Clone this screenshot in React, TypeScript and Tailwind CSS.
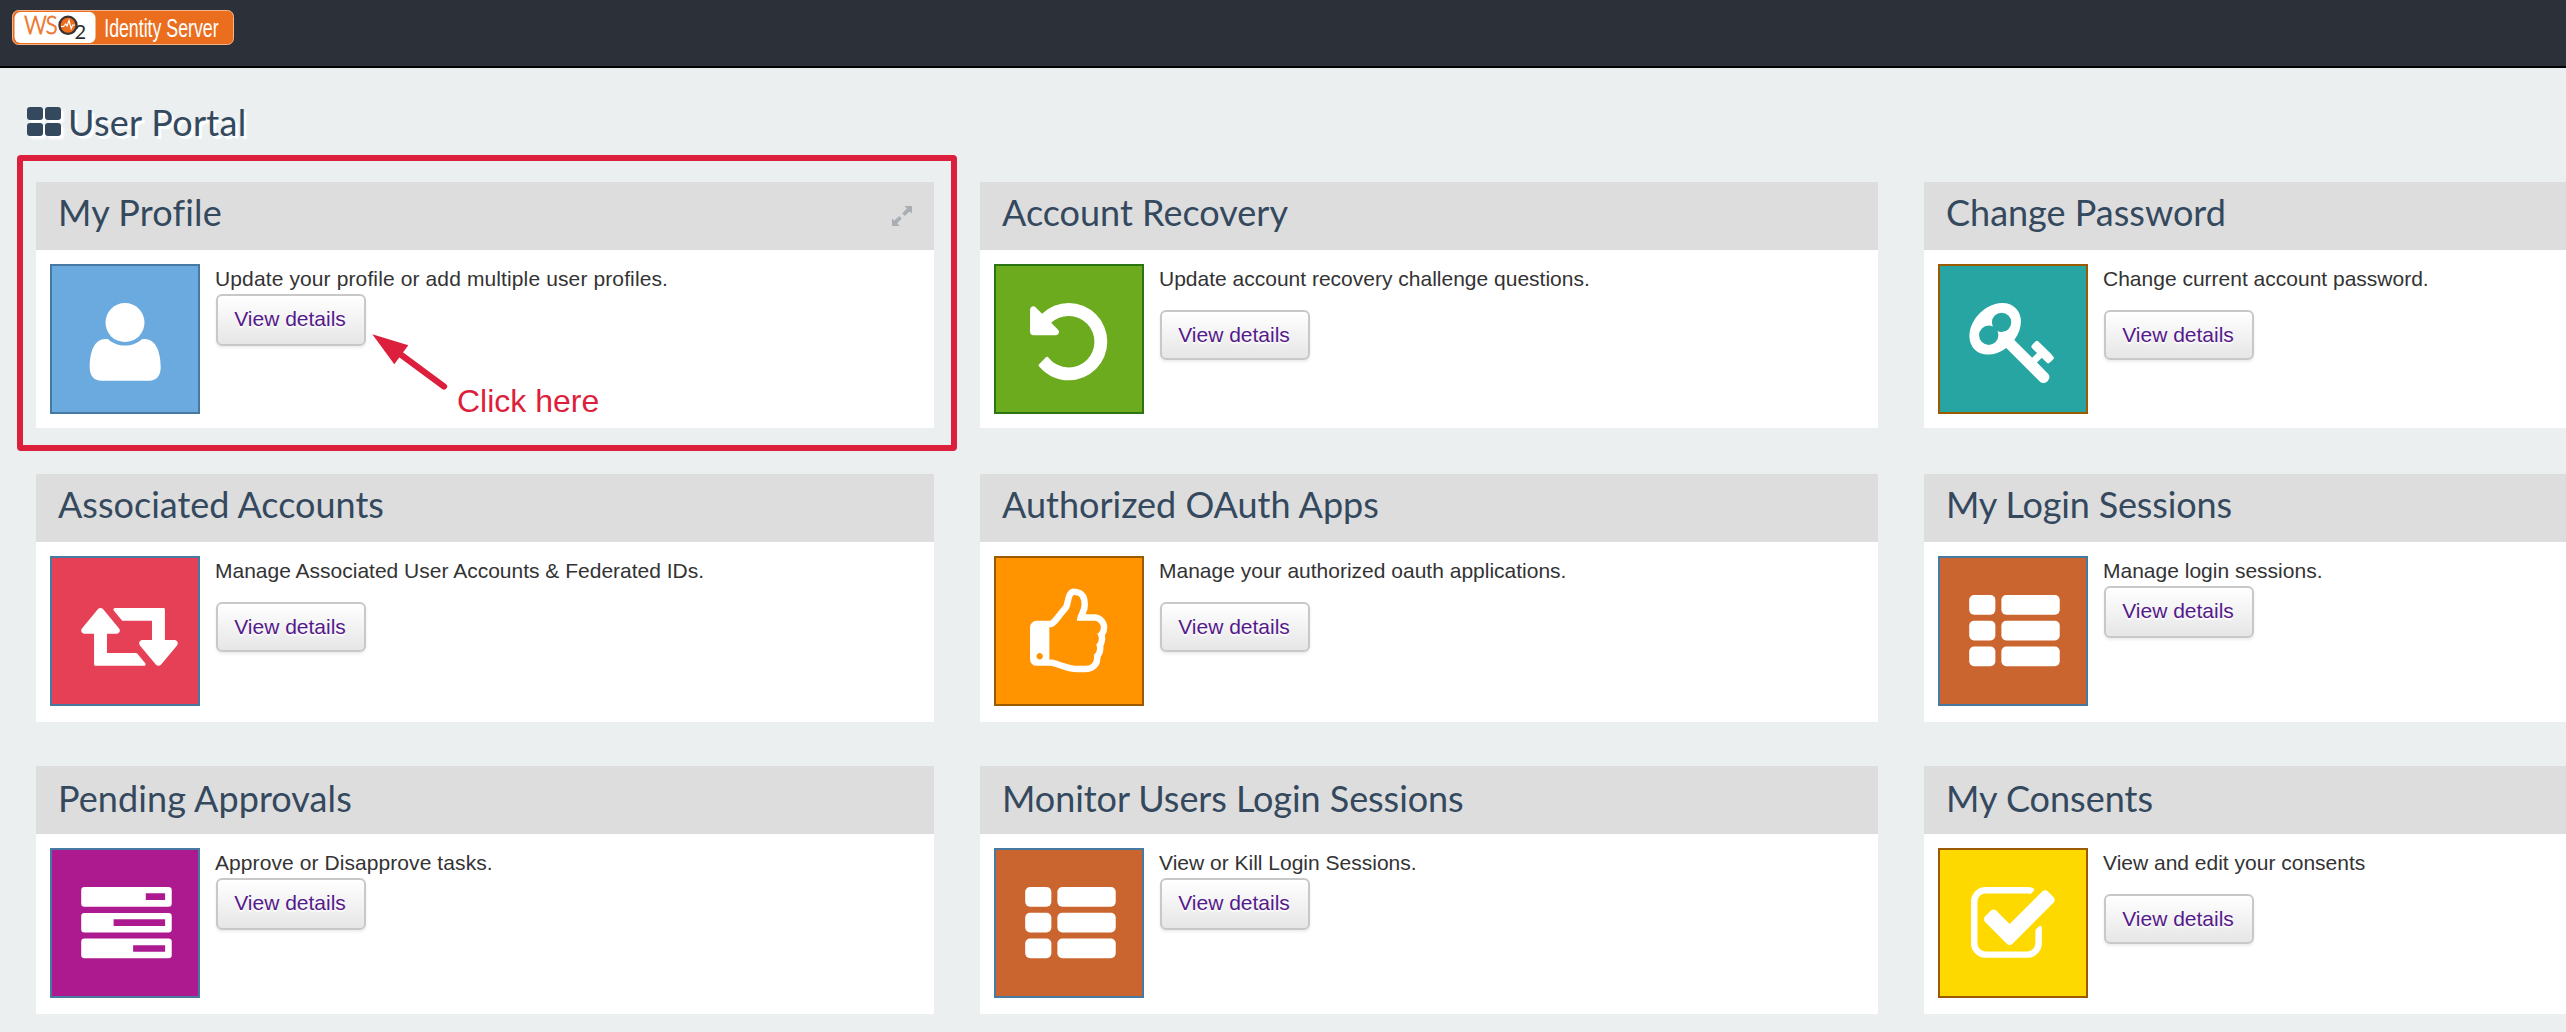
import React from "react";

type IconName = "user" | "undo" | "key" | "retweet" | "thumb" | "list" | "tasks" | "check";

const PATHS: Record<string, string> = {
  undo: "M1664 896q0 156-61 298t-164 245-245 164-298 61q-172 0-327-72.5t-264-204.5q-7-10-6.5-22.5t8.5-20.5l137-138q10-9 25-9 16 2 23 12 73 95 179 147t225 52q104 0 198.5-40.5t163.5-109.5 109.5-163.5 40.5-198.5-40.5-198.5-109.5-163.5-163.5-109.5-198.5-40.5q-98 0-188 35.5t-160 101.5l137 138q31 30 14 69-17 40-59 40h-448q-26 0-45-19t-19-45v-448q0-42 40-59 39-17 69 14l130 129q107-101 244.5-156.5t284.5-55.5q156 0 298 61t245 164 164 245 61 298z",
  key: "M832 512q0-80-56-136t-136-56-136 56-56 136q0 42 19 83-41-19-83-19-80 0-136 56t-56 136 56 136 136 56 136-56 56-136q0-42-19-83 41 19 83 19 80 0 136-56t56-136zm851 704q0 17-49 66t-66 49q-9 0-28.5-16t-36.5-33-38.5-40-24.5-26l-96 96 220 220q28 28 28 68 0 42-39 81t-81 39q-40 0-68-28l-671-671q-176 131-365 131-163 0-265.5-102.5t-102.5-265.5q0-160 95-313t248-248 313-95q163 0 265.5 102.5t102.5 265.5q0 189-131 365l355 355 96-96q-3-3-26-24.5t-40-38.5-33-36.5-16-28.5q0-17 49-66t66-49q13 0 23 10 6 6 46 44.5t82 79.5 86.5 86 73 78 28.5 41z",
  retweet: "M1280 1504q0 13-9.5 22.5t-22.5 9.5h-960q-8 0-13.5-2t-9-7-5.5-8-3-11.5-1-11.5v-600h-192q-26 0-45-19t-19-45q0-24 15-41l320-384q19-22 49-22t49 22l320 384q15 17 15 41 0 26-19 45t-45 19h-192v384h576q16 0 25 11l160 192q7 10 7 21zm640-416q0 24-15 41l-320 384q-20 23-49 23t-49-23l-320-384q-15-17-15-41 0-26 19-45t45-19h192v-384h-576q-16 0-25-12l-160-192q-7-9-7-20 0-13 9.5-22.5t22.5-9.5h960q8 0 13.5 2t9 7 5.5 8 3 11.5 1 11.5v600h192q26 0 45 19t19 45z",
  thumb: "M384 1344q0-26-19-45t-45-19-45 19-19 45 19 45 45 19 45-19 19-45zm1152-576q0-51-39-89.5t-89-38.5h-352q0-58 48-159.5t48-160.5q0-98-32-145t-128-47q-26 26-38 85t-30.5 125.5-59.5 109.5q-22 23-77 91-4 5-23 30t-31.5 41-34.5 42.5-40 44-38.5 35.5-40 27-35.5 9h-32v640h32q13 0 31.5 3t33 6.5 38 11 35 11.5 35.5 12.5 29 10.5q211 73 342 73h121q192 0 192-167 0-26-5-56 30-16 47.5-52.5t17.5-73.5-18-69q53-50 53-119 0-25-10-55.5t-25-47.5q32-1 53.5-47t21.5-81zm128-1q0 89-49 163 9 33 9 69 0 77-38 144 3 21 3 43 0 101-60 178 1 139-85 219.5t-227 80.5h-129q-96 0-189.5-22.5t-216.5-65.5q-116-40-138-40h-288q-53 0-90.5-37.5t-37.5-90.5v-640q0-53 37.5-90.5t90.5-37.5h274q36-24 137-155 58-75 107-128 24-25 35.5-85.5t30.5-126.5 62-108q39-37 90-37 84 0 151 32.5t102 101.5 35 186q0 93-48 192h176q104 0 180 76t76 179z",
  check: "M1472 930v318q0 119-84.5 203.5t-203.5 84.5h-832q-119 0-203.5-84.5t-84.5-203.5v-832q0-119 84.5-203.5t203.5-84.5h832q63 0 117 25 15 7 18 23 3 17-9 29l-49 49q-10 10-23 10-3 0-9-2-23-6-45-6h-832q-66 0-113 47t-47 113v832q0 66 47 113t113 47h832q66 0 113-47t47-113v-254q0-13 9-22l64-64q10-10 23-10 6 0 12 3 20 8 20 29zm231-489l-814 814q-24 24-57 24t-57-24l-430-430q-24-24-24-57t24-57l110-110q24-24 57-24t57 24l263 263 647-647q24-24 57-24t57 24l110 110q24 24 24 57t-24 57z",
};

/* Horizontal origin of each glyph inside the 146px tile face. */
const ORIGIN: Record<IconName, number> = {
  user: 0, undo: 27.6, key: 29.4, retweet: 29.2, thumb: 27.6, list: 29.2, tasks: 29.2, check: 27.8,
};

function TileIcon({ name }: { name: IconName }) {
  if (name === "user") {
    return (
      <svg viewBox="2 2 146 146" className="size-full fill-white">
        <circle cx="75" cy="58.6" r="19.5" />
        <path d="M58.2 75.2C67 83.6 83 83.6 91.8 75.2C104 73 110.7 85 110.7 103.5C110.7 111.5 106.5 116.8 99 116.8H51.5C44 116.8 39.7 111.5 39.7 103.5C39.7 85 46 73 58.2 75.2Z" />
      </svg>
    );
  }
  const rows = [128, 640, 1152];
  return (
    <svg viewBox="0 0 146 146" className="size-full fill-white">
      <g transform={`translate(${ORIGIN[name]} 30.6) scale(0.0503)`}>
        {name === "list" &&
          rows.map((y) => (
            <g key={y}>
              <rect x="0" y={y} width="520" height="390" rx="96" />
              <rect x="640" y={y} width="1160" height="390" rx="96" />
            </g>
          ))}
        {name === "tasks" && (
          <path
            fillRule="evenodd"
            d="M64 128H1736a64 64 0 0 1 64 64V454a64 64 0 0 1-64 64H64a64 64 0 0 1-64-64V192a64 64 0 0 1 64-64zM1284 252V386H1668V252zM64 644H1736a64 64 0 0 1 64 64V966a64 64 0 0 1-64 64H64a64 64 0 0 1-64-64V708a64 64 0 0 1 64-64zM644 768V902H1668V768zM64 1152H1736a64 64 0 0 1 64 64V1478a64 64 0 0 1-64 64H64a64 64 0 0 1-64-64V1216a64 64 0 0 1 64-64zM1032 1284V1416H1668V1284z"
          />
        )}
        {PATHS[name] && <path d={PATHS[name]} />}
      </g>
    </svg>
  );
}

function Logo() {
  return (
    <svg viewBox="0 0 222 35" className="h-[35px] w-[222px]">
      <rect x="0.5" y="0.5" width="221" height="34" rx="6" fill="#eb6e1f" stroke="#f6b48a" strokeWidth="1" />
      <rect x="2.5" y="2" width="81" height="31" rx="6" fill="#fff" />
      <text transform="translate(12.3 24.3) scale(0.9 1)" fontFamily="Lato, sans-serif" fontSize="24.5" fontWeight="300" fill="#ee7a30" stroke="#ee7a30" strokeWidth="0.9" letterSpacing="-1">
        WS
      </text>
      <text transform="translate(62.6 29.3)" fontFamily="Lato, sans-serif" fontSize="20" fill="#2b2b2b">
        2
      </text>
      <circle cx="56" cy="15.3" r="8.6" fill="#eb6e1f" stroke="#3a3330" strokeWidth="2.2" />
      <path d="M49 16.5h2.6l2-2.5 1.4 2 2-5.5 2.2 8 1.6-3.5h2.2" fill="none" stroke="#fff" strokeWidth="1.2" />
      <text transform="translate(92.2 26.7) scale(0.71 1)" fontFamily="'Liberation Sans', Arial, sans-serif" fontSize="25" fill="#fff">
        Identity Server
      </text>
    </svg>
  );
}

interface Card {
  title: string;
  titleClass?: string;
  text: string;
  textClass?: string;
  icon: IconName;
  tile: string;
  tall?: boolean;
  low?: boolean;
  expand?: boolean;
}

const BLUE = "border-[#467aa3]";
const BROWN = "border-[#9b5a00]";

const CARDS: Card[] = [
  { title: "My Profile", titleClass: "tracking-[0.15px]", text: "Update your profile or add multiple user profiles.", textClass: "tracking-[0.12px]", icon: "user", tile: `bg-[#6baade] ${BLUE}`, tall: true, expand: true },
  { title: "Account Recovery", text: "Update account recovery challenge questions.", icon: "undo", tile: "bg-[#6caa1e] border-[#2a7411]" },
  { title: "Change Password", text: "Change current account password.", icon: "key", tile: `bg-[#27a5a2] ${BROWN}` },
  { title: "Associated Accounts", text: "Manage Associated User Accounts & Federated IDs.", icon: "retweet", tile: `bg-[#e64056] ${BLUE}` },
  { title: "Authorized OAuth Apps", text: "Manage your authorized oauth applications.", icon: "thumb", tile: `bg-[#ff9400] ${BROWN}` },
  { title: "My Login Sessions", titleClass: "tracking-[-0.15px]", text: "Manage login sessions.", icon: "list", tile: `bg-[#cb652f] ${BLUE}`, tall: true },
  { title: "Pending Approvals", titleClass: "tracking-[0.08px]", text: "Approve or Disapprove tasks.", textClass: "tracking-[0.08px]", icon: "tasks", tile: `bg-[#ad1a8f] ${BLUE}`, tall: true, low: true },
  { title: "Monitor Users Login Sessions", titleClass: "tracking-[-0.06px]", text: "View or Kill Login Sessions.", icon: "list", tile: `bg-[#cb652f] ${BLUE}`, tall: true, low: true },
  { title: "My Consents", text: "View and edit your consents", icon: "check", tile: `bg-[#fed900] ${BROWN}`, low: true },
];

function PortalCard({ card }: { card: Card }) {
  return (
    <section className="flex flex-col bg-white">
      <header className={`flex h-[68px] shrink-0 justify-between bg-[#dddddd] px-[22px] ${card.low ? "pt-[10px]" : "pt-[8px]"}`}>
        <h2 className={`font-[Lato] text-[36px] leading-[44px] whitespace-nowrap text-[#34495e] ${card.titleClass ?? ""}`}>{card.title}</h2>
        {card.expand && (
          <svg viewBox="0 0 20 20" className="mt-4 size-5 fill-[#a9aeb5]">
            <path d="M12.5 0H19.2a.8.8 0 0 1 .8.8V7.5L17.6 5.4 12.8 9.9 10.2 7.5 14.8 2.6zM7.5 20H.8a.8.8 0 0 1-.8-.8V12.5L2.4 14.6 7.2 10.1 9.8 12.5 5.2 17.4z" />
          </svg>
        )}
      </header>
      <div className="flex gap-4 p-3.5">
        <div className={`size-[150px] shrink-0 border-2 ${card.tile}`}>
          <TileIcon name={card.icon} />
        </div>
        <div className={`flex flex-col items-start ${card.tall ? "gap-px" : "gap-[17px]"}`}>
          <p className={`-ml-px h-[29px] pt-px text-[21px] leading-7 whitespace-nowrap text-[#333333] ${card.textClass ?? ""}`}>{card.text}</p>
          <a
            className={`w-[150px] rounded-md border-2 border-[#c8c8c8] bg-linear-to-b from-white to-[#e6e6e6] pr-0.5 text-center text-[21px] text-[#551a8b] shadow-[0_2px_3px_rgba(0,0,0,0.08)] [text-shadow:0_2px_1px_#fff] ${card.tall ? "h-[52px] leading-[46px]" : "h-[50px] leading-[46px]"}`}
          >
            View details
          </a>
        </div>
      </div>
    </section>
  );
}

export default function App() {
  return (
    <div className="relative h-[1032px] w-[2566px] overflow-hidden bg-[#ebeff0] font-['Liberation_Sans',Arial,sans-serif]">
      <header className="h-[68px] border-b-2 border-black bg-[#2b3039] pt-2.5 pl-3">
        <Logo />
      </header>
      <h1 className="flex h-[114px] items-start gap-[7px] pt-[31px] pl-[27px] font-[Lato] text-[36px] leading-[46px] tracking-[0.3px] text-[#34495e] [text-shadow:3px_3px_1px_#fff]">
        <svg viewBox="0 0 34 29" className="mt-2 h-[29px] w-[34px] overflow-visible fill-[#34495e] drop-shadow-[3px_3px_1px_#fff]">
          <rect x="0" y="0" width="16" height="13" rx="3" />
          <rect x="18" y="0" width="16" height="13" rx="3" />
          <rect x="0" y="16" width="16" height="13" rx="3" />
          <rect x="18" y="16" width="16" height="13" rx="3" />
        </svg>
        User Portal
      </h1>
      <main className="grid grid-cols-[898px_898px_898px] grid-rows-[246px_294px_292px] gap-x-[46px] pl-9">
        {CARDS.slice(0, 3).map((c) => <PortalCard key={c.title} card={c} />)}
        <div className="col-span-3 mt-[46px] grid grid-cols-subgrid">
          {CARDS.slice(3, 6).map((c) => <PortalCard key={c.title} card={c} />)}
        </div>
        <div className="col-span-3 mt-11 grid grid-cols-subgrid">
          {CARDS.slice(6).map((c) => <PortalCard key={c.title} card={c} />)}
        </div>
      </main>

      {/* Walkthrough callout laid over the first card */}
      <div className="absolute top-[155px] left-[17px] h-[296px] w-[940px] rounded border-6 border-[#dc1f3c]" />
      <svg viewBox="370 330 80 62" className="absolute top-[330px] left-[370px] h-[62px] w-20">
        <path d="M400 354L444 386.5" stroke="#dc1f3c" strokeWidth="6.3" strokeLinecap="round" />
        <path d="M372.3 334.3L408.3 345.3L394.3 364.3Z" fill="#dc1f3c" />
      </svg>
      <span className="absolute top-[383px] left-[457px] text-[32px] leading-9 whitespace-nowrap text-[#dc1f3c]">Click here</span>
    </div>
  );
}
